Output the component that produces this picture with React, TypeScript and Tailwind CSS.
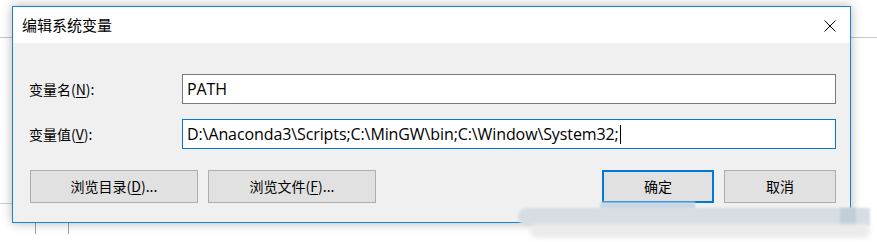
import React from "react";

const ui = { fontFamily: '"Open Sans", "Noto Sans CJK SC", sans-serif' };
const cjk = { fontFamily: '"Noto Sans CJK SC", "Open Sans", sans-serif' };

const U = ({ children }: { children: React.ReactNode }) => (
  <span className="underline underline-offset-2 decoration-1">{children}</span>
);

const Btn = ({
  children,
  w,
  primary,
}: {
  children: React.ReactNode;
  w: string;
  primary?: boolean;
}) => (
  <button
    style={cjk}
    className={
      primary
        ? `${w} h-[33px] border-2 border-[#0078d7] bg-[#e1e1e1] text-[14px] text-black`
        : `${w} h-[33px] border border-[#adadad] bg-[#e1e1e1] text-[14px] text-black`
    }
  >
    {children}
  </button>
);

export default function App() {
  return (
    <div className="relative h-[242px] w-[877px] overflow-hidden bg-white">
      {/* window behind */}
      <div className="absolute left-0 top-[37px] h-px w-[877px] bg-[#c8c8c8]" />
      <div className="absolute left-0 top-[203px] h-px w-[20px] bg-[#d0d0d0]" />
      <div className="absolute left-[35px] top-[222px] h-[12px] w-px bg-[#a0a0a0]" />
      <div className="absolute left-[68px] top-[222px] h-[12px] w-px bg-[#a0a0a0]" />

      <div className="relative ml-[12px] mt-[6px] flex h-[217px] w-[839px] flex-col border border-[#1883d7] bg-[#f0f0f0] shadow-[0_0_10px_rgba(0,0,0,0.3)]">
        <div className="flex h-[36px] items-center justify-between bg-white pl-[9px] pr-[14px]">
          <span style={cjk} className="text-[15px] text-black">
            编辑系统变量
          </span>
          <svg width="12" height="12" viewBox="0 0 12 12" className="mt-[1px]">
            <path d="M0.5 0.5 L11.5 11.5 M11.5 0.5 L0.5 11.5" stroke="#000" strokeWidth="1" />
          </svg>
        </div>

        <div className="flex flex-col pl-[16px] pr-[14px] pt-[31px]">
          <div className="flex items-center">
            <label style={cjk} className="w-[153px] text-[14px] text-black">
              变量名(<U>N</U>):
            </label>
            <div
              style={ui}
              className="flex h-[30px] flex-1 items-center border border-[#7a7a7a] bg-white pl-[4px] text-[16px] tracking-[-0.1px] text-black"
            >
              PATH
            </div>
          </div>
          <div className="mt-[15px] flex items-center">
            <label style={cjk} className="w-[153px] text-[14px] text-black">
              变量值(<U>V</U>):
            </label>
            <div
              style={ui}
              className="flex h-[30px] flex-1 items-center border border-[#0078d7] bg-white pl-[4px] text-[16px] text-black"
            >
              <span className="tracking-[-0.1px]">
                D:\Anaconda3\Scripts;C:\MinGW\bin;C:\Window\System32;
              </span>
              <span className="ml-px inline-block h-[19px] w-px bg-black" />
            </div>
          </div>

          <div className="mt-[21px] flex items-center">
            <div className="ml-px flex gap-[10px]">
              <Btn w="w-[168px]">
                浏览目录(<U>D</U>)...
              </Btn>
              <Btn w="w-[168px]">
                浏览文件(<U>F</U>)...
              </Btn>
            </div>
            <div className="ml-auto flex gap-[10px]">
              <Btn w="w-[112px]" primary>
                确定
              </Btn>
              <Btn w="w-[112px]">取消</Btn>
            </div>
          </div>
        </div>
      </div>

      {/* blurred watermark */}
      <div className="absolute left-[600px] top-[202px] h-[8px] w-[95px] bg-[#c9d8e4] blur-[1px]" />
      <div className="absolute left-[518px] top-[208px] h-[18px] w-[352px] rounded-l-full bg-[#d6dde4] blur-[1px]" />
      <div className="absolute left-[840px] top-[208px] h-[18px] w-[16px] bg-[#c2ced7] blur-[1px]" />
      <div className="absolute left-[530px] top-[224px] h-[14px] w-[340px] rounded-full bg-[#ebebeb] blur-[2px]" />
    </div>
  );
}
